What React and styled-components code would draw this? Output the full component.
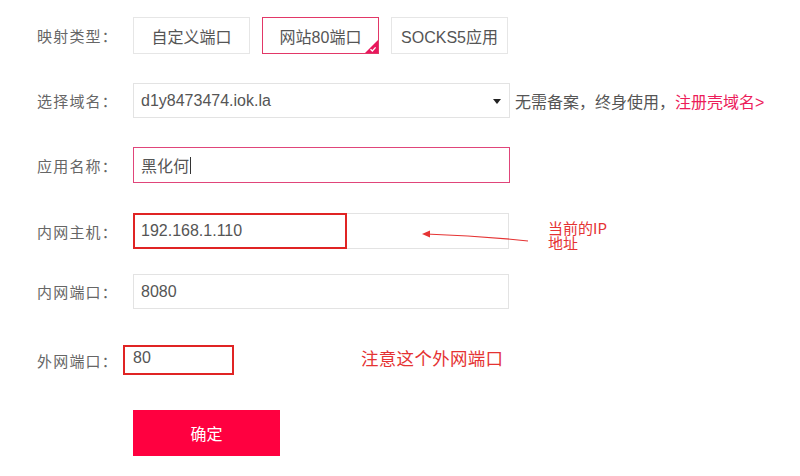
import React from "react";
import styled, { createGlobalStyle } from "styled-components";

const Global = createGlobalStyle`
  html, body { margin: 0; padding: 0; background: #fff; }
  body {
    font-family: "Liberation Sans", "Noto Sans CJK SC", sans-serif;
    width: 800px;
    height: 476px;
    overflow: hidden;
  }
`;

const Form = styled.div`
  display: flex;
  flex-direction: column;
  padding-left: 37px;
`;

const Row = styled.div`
  position: relative;
  display: flex;
  align-items: center;
  height: ${(p) => p.$h}px;
  margin-top: ${(p) => p.$mt}px;
`;

const Label = styled.div`
  width: 96px;
  flex: none;
  font-size: 15px;
  color: #666;
  letter-spacing: 1.2px;
`;

const Options = styled.div`
  display: flex;
  gap: 12px;
  height: 100%;
`;

const Option = styled.div`
  position: relative;
  box-sizing: border-box;
  width: 117px;
  height: 100%;
  display: flex;
  align-items: center;
  justify-content: center;
  font-size: 16px;
  color: #555;
  background: #fff;
  border: 1px solid ${(p) => (p.$active ? "#e23767" : "#e6e6e6")};
  overflow: hidden;
`;

const Corner = styled.svg`
  position: absolute;
  right: 0;
  bottom: 0;
  width: 13px;
  height: 13px;
`;

const Field = styled.div`
  position: relative;
  box-sizing: border-box;
  width: ${(p) => p.$w || 377}px;
  height: 100%;
  display: flex;
  align-items: center;
  padding-left: 7px;
  font-size: 16px;
  color: #555;
  border: 1px solid ${(p) => (p.$focus ? "#e0457a" : "#e3e3e3")};
  background: #fff;
`;

const Arrow = styled.span`
  position: absolute;
  right: 8px;
  top: 50%;
  margin-top: -2px;
  width: 0;
  height: 0;
  border-left: 4.5px solid transparent;
  border-right: 4.5px solid transparent;
  border-top: 5px solid #222;
`;

const Hint = styled.div`
  margin-left: 5px;
  font-size: 16px;
  color: #555;
  white-space: nowrap;
`;

const Link = styled.a`
  color: #ec1c5a;
  text-decoration: none;
`;

const Caret = styled.span`
  display: inline-block;
  width: 1px;
  height: 17px;
  background: #333;
  margin-left: 1px;
  vertical-align: middle;
`;

const MarkBox = styled.div`
  position: absolute;
  left: -1px;
  top: -1px;
  width: 214px;
  height: 36px;
  box-sizing: border-box;
  border: 2px solid #e02424;
  pointer-events: none;
`;

const Note = styled.div`
  position: absolute;
  left: ${(p) => p.$x}px;
  top: ${(p) => p.$y}px;
  font-family: "Noto Sans CJK SC", "DejaVu Sans", sans-serif;
  font-size: ${(p) => p.$size || 15}px;
  line-height: ${(p) => p.$lh || 15}px;
  color: #e53333;
  white-space: pre;
`;

const ArrowSvg = styled.svg`
  position: absolute;
  left: 383px;
  top: 0;
  width: 112px;
  height: 36px;
  overflow: visible;
`;

const PortBox = styled.div`
  box-sizing: border-box;
  width: 111px;
  height: 100%;
  margin-left: -10px;
  border: 2px solid #e02424;
  padding: 2px 0 0 8px;
  font-size: 16px;
  color: #555;
  display: flex;
  align-items: flex-start;
`;

const PortNote = styled.div`
  margin-left: 127px;
  margin-top: -6px;
  font-family: "Noto Sans CJK SC", sans-serif;
  font-size: 17.5px;
  color: #e53333;
  letter-spacing: 0.3px;
`;

const Submit = styled.button`
  margin-left: 96px;
  width: 147px;
  height: 100%;
  border: none;
  background: #ff0040;
  color: #fff;
  font-family: "Liberation Sans", "Noto Sans CJK SC", sans-serif;
  font-size: 16px;
  padding: 0;
`;

export default function App() {
  return (
    <>
      <Global />
      <Form>
        <Row $h={37} $mt={17}>
          <Label>映射类型：</Label>
          <Options>
            <Option>自定义端口</Option>
            <Option $active>
              网站80端口
              <Corner viewBox="0 0 13 13">
                <polygon points="13,0 13,13 0,13" fill="#e8175d" />
                <polyline points="5.5,9.2 7.4,11 10.6,7.4" fill="none" stroke="#fff" strokeWidth="1.3" />
              </Corner>
            </Option>
            <Option>SOCKS5应用</Option>
          </Options>
        </Row>

        <Row $h={35} $mt={29}>
          <Label>选择域名：</Label>
          <Field>
            d1y8473474.iok.la
            <Arrow />
          </Field>
          <Hint>
            无需备案，终身使用，<Link>注册壳域名&gt;</Link>
          </Hint>
        </Row>

        <Row $h={36} $mt={29}>
          <Label>应用名称：</Label>
          <Field $focus>
            黑化何<Caret />
          </Field>
        </Row>

        <Row $h={36} $mt={30}>
          <Label>内网主机：</Label>
          <Field $w={376}>
            192.168.1.110
            <MarkBox />
          </Field>
          <ArrowSvg viewBox="0 0 112 36">
            <path d="M6 21 C 40 22, 80 25, 108 28" fill="none" stroke="#e53333" strokeWidth="1.2" />
            <polygon points="2,21 10,17.5 10,24.5" fill="#e53333" />
          </ArrowSvg>
          <Note $x={511} $y={7}>{"当前的IP\n地址"}</Note>
        </Row>

        <Row $h={35} $mt={25}>
          <Label>内网端口：</Label>
          <Field $w={376}>8080</Field>
        </Row>

        <Row $h={30} $mt={36}>
          <Label>外网端口：</Label>
          <PortBox>80</PortBox>
          <PortNote>注意这个外网端口</PortNote>
        </Row>

        <Row $h={46} $mt={35}>
          <Submit>确定</Submit>
        </Row>
      </Form>
    </>
  );
}
